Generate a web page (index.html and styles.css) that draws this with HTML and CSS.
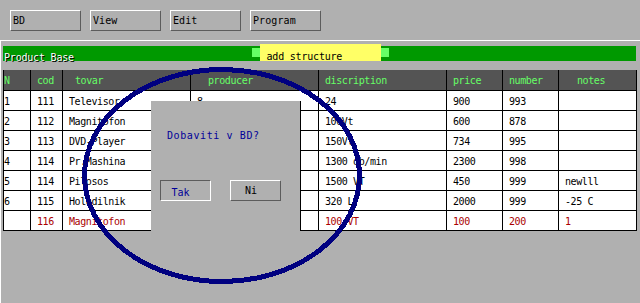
FILE: index.html
```html
<!DOCTYPE html>
<html>
<head>
<meta charset="utf-8">
<link rel="stylesheet" href="styles.css">
</head>
<body>
<div class="toolbar">
  <div class="btn">BD</div>
  <div class="btn">View</div>
  <div class="btn">Edit</div>
  <div class="btn">Program</div>
</div>
<div class="panel">
  <div class="titlebar">
    <div class="title">Product Base</div>
    <div class="knob"></div>
    <div class="tag">add structure</div>
    <div class="knob"></div>
  </div>
  <div class="grid">
    <div class="cell head n">N</div>
    <div class="cell head">cod</div>
    <div class="cell head h-tovar">tovar</div>
    <div class="cell head h-producer">producer</div>
    <div class="cell head">discription</div>
    <div class="cell head">price</div>
    <div class="cell head">number</div>
    <div class="cell head h-notes">notes</div>

    <div class="cell n">1</div><div class="cell">111</div><div class="cell">Televisor</div><div class="cell">8</div><div class="cell">24</div><div class="cell">900</div><div class="cell">993</div><div class="cell"></div>
    <div class="cell n">2</div><div class="cell">112</div><div class="cell">Magnitofon</div><div class="cell"></div><div class="cell">100Vt</div><div class="cell">600</div><div class="cell">878</div><div class="cell"></div>
    <div class="cell n">3</div><div class="cell">113</div><div class="cell">DVD-Player</div><div class="cell"></div><div class="cell">150Vt</div><div class="cell">734</div><div class="cell">995</div><div class="cell"></div>
    <div class="cell n">4</div><div class="cell">114</div><div class="cell">Pr.Mashina</div><div class="cell"></div><div class="cell">1300 ob/min</div><div class="cell">2300</div><div class="cell">998</div><div class="cell"></div>
    <div class="cell n">5</div><div class="cell">114</div><div class="cell">Pilosos</div><div class="cell"></div><div class="cell">1500 VT</div><div class="cell">450</div><div class="cell">999</div><div class="cell">newlll</div>
    <div class="cell n">6</div><div class="cell">115</div><div class="cell">Holodilnik</div><div class="cell"></div><div class="cell">320 L</div><div class="cell">2000</div><div class="cell">999</div><div class="cell">-25 C</div>
    <div class="cell n red"></div><div class="cell red">116</div><div class="cell red">Magnitofon</div><div class="cell red"></div><div class="cell red">100 VT</div><div class="cell red">100</div><div class="cell red">200</div><div class="cell red">1</div>
  </div>
</div>
<div class="dialog">
  <div class="dlg-msg">Dobaviti v BD?</div>
  <div class="dlg-btns">
    <div class="dbtn pressed">Tak</div>
    <div class="dbtn raised">Ni</div>
  </div>
</div>
<svg class="ring" width="640" height="303" viewBox="0 0 640 303">
  <ellipse cx="222" cy="175.5" rx="137.5" ry="106" fill="none" stroke="#000080" stroke-width="5"/>
</svg>
</body>
</html>
```

FILE: styles.css
```css
body {
  margin: 0;
  width: 640px;
  height: 303px;
  overflow: hidden;
  position: relative;
  background: #b0b0b0;
  color: #000;
  font-family: "DejaVu Sans Mono", "Liberation Mono", monospace;
  font-size: 10px;
  line-height: 12px;
}

.toolbar {
  display: flex;
  gap: 9px;
  height: 40px;
  box-sizing: border-box;
  padding: 10px 0 0 10px;
}

.btn {
  width: 71px;
  height: 21px;
  box-sizing: border-box;
  border: 1px solid;
  border-color: #fff #5c5c5c #5c5c5c #fff;
  padding: 4px 0 0 2px;
  letter-spacing: 0.1px;
}

.panel {
  height: 263px;
  box-sizing: border-box;
  border-top: 1px solid #fff;
  border-left: 1px solid #fff;
  padding: 5px 0 0 2px;
}

.titlebar {
  display: flex;
  align-items: flex-start;
  width: 633px;
  height: 15px;
  background: #009900;
}

.title {
  width: 249px;
  box-sizing: border-box;
  padding: 6px 0 0 1px;
  color: #fff;
  text-shadow: 1px 1px 0 #000;
  white-space: nowrap;
  letter-spacing: -0.2px;
}

.knob {
  width: 8px;
  height: 9px;
  margin-top: 2px;
  background: #66ff66;
}

.tag {
  width: 121px;
  height: 17px;
  margin-top: -2px;
  box-sizing: border-box;
  padding: 7px 0 0 6.5px;
  background: #ffff66;
  white-space: nowrap;
  letter-spacing: -0.2px;
}

.grid {
  margin-top: 9px;
  display: grid;
  grid-template-columns: 27px 32px 128px 128px 128px 56px 56px 78px;
  width: 634px;
  box-sizing: border-box;
  border-right: 1px solid #000;
}

.cell {
  height: 20px;
  box-sizing: border-box;
  border-left: 1px solid #000;
  border-bottom: 1px solid #000;
  padding: 5px 0 0 6px;
  background: #fff;
  white-space: nowrap;
  overflow: hidden;
  letter-spacing: -0.4px;
}

.head {
  height: 21px;
  background: #545454;
  color: #66ff66;
}

.cell.n { padding-left: 0; }
.h-tovar { padding-left: 12px; }
.h-producer { padding-left: 17px; }
.h-notes { padding-left: 18px; }

.red { color: #aa0000; }

.dialog {
  position: absolute;
  left: 151px;
  top: 101px;
  width: 150px;
  height: 130px;
  box-sizing: border-box;
  border-right: 1px solid #000;
  background: #b0b0b0;
  padding-top: 29px;
}

.dlg-msg {
  padding-left: 16px;
  color: #000099;
  letter-spacing: 0.6px;
  white-space: nowrap;
}

.dlg-btns {
  display: flex;
  gap: 19px;
  margin-top: 38px;
  padding-left: 9px;
}

.dbtn {
  width: 51px;
  height: 21px;
  box-sizing: border-box;
  border: 1px solid;
}

.dbtn.pressed {
  border-color: #5c5c5c #fff #fff #5c5c5c;
  color: #000099;
  padding: 6px 0 0 10.5px;
}

.dbtn.raised {
  border-color: #fff #5c5c5c #5c5c5c #fff;
  padding: 4px 0 0 14px;
}

.ring {
  position: absolute;
  left: 0;
  top: 0;
  pointer-events: none;
  shape-rendering: crispEdges;
}
```
